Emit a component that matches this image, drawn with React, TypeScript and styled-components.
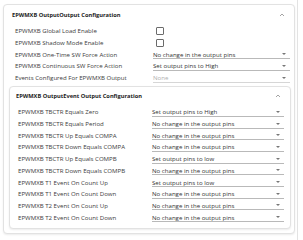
import React from "react";
import styled, { createGlobalStyle } from "styled-components";

const GlobalStyle = createGlobalStyle`
    html, body {
        margin: 0;
        padding: 0;
        background: #ffffff;
    }
    body {
        font-family: "Open Sans", "Liberation Sans", sans-serif;
    }
`;

const Page = styled.div`
    display: flex;
    width: 303px;
    height: 240px;
    overflow: hidden;
    background: #fff;
`;

const Main = styled.div`
    width: 298px;
    padding: 4px 0 0 3px;
    box-sizing: border-box;
`;

const Edge = styled.div`
    width: 5px;
    border-left: 1px solid #e3e3e3;
`;

const Card = styled.section<{ $inner?: boolean }>`
    border: 1px solid #e2e2e2;
    border-radius: 4px;
    background: #fff;
    box-shadow: 0 1px 2px rgba(0, 0, 0, 0.08);
    width: ${(p) => (p.$inner ? "282px" : "292px")};
    box-sizing: border-box;
    margin: ${(p) => (p.$inner ? "2.6px 0 0 5px" : "0")};
    padding-bottom: ${(p) => (p.$inner ? "5px" : "4px")};
`;

const Header = styled.div<{ $inner?: boolean }>`
    display: flex;
    align-items: center;
    justify-content: space-between;
    height: ${(p) => (p.$inner ? "19px" : "20px")};
    padding: ${(p) => (p.$inner ? "0 9px 2px 6px" : "0 9px 0 8px")};
    font-size: 5.7px;
    font-weight: 700;
    color: #222;
    box-sizing: border-box;
`;

const Chevron = () => (
    <svg width="6" height="4" viewBox="0 0 6 4">
        <polyline points="1,3 3,1 5,3" fill="none" stroke="#9a9a9a" strokeWidth="0.9" />
    </svg>
);

const Row = styled.div<{ $inner?: boolean }>`
    display: flex;
    align-items: center;
    height: 11.7px;
    padding-left: ${(p) => (p.$inner ? "8px" : "11px")};
    padding-right: ${(p) => (p.$inner ? "6px" : "4px")};
`;

const Label = styled.div<{ $inner?: boolean }>`
    width: ${(p) => (p.$inner ? "134px" : "138px")};
    flex-shrink: 0;
    font-size: 6.1px;
    color: #3c3c3c;
    white-space: nowrap;
`;

const Box = styled.span`
    display: block;
    width: 6px;
    height: 6px;
    margin-left: 3px;
    border: 1px solid #6b6b6b;
    border-radius: 1px;
`;

const Select = styled.div<{ $disabled?: boolean }>`
    flex: 1;
    display: flex;
    align-items: center;
    justify-content: space-between;
    height: 8px;
    margin-top: 1px;
    border-bottom: 1px solid ${(p) => (p.$disabled ? "#d6d6d6" : "#b9b9b9")};
    font-size: 6.1px;
    color: ${(p) => (p.$disabled ? "#b0b0b0" : "#333")};
    white-space: nowrap;
`;

const Arrow = styled.span`
    width: 0;
    height: 0;
    margin-right: 4px;
    border-left: 2px solid transparent;
    border-right: 2px solid transparent;
    border-top: 2.5px solid #777;
`;

const NO_CHANGE = "No change in the output pins";

const outerRows: { label: string; kind: "check" | "select"; value?: string; disabled?: boolean }[] = [
    { label: "EPWMXB Global Load Enable", kind: "check" },
    { label: "EPWMXB Shadow Mode Enable", kind: "check" },
    { label: "EPWMXB One-Time SW Force Action", kind: "select", value: NO_CHANGE },
    { label: "EPWMXB Continuous SW Force Action", kind: "select", value: "Set output pins to High" },
    { label: "Events Configured For EPWMXB Output", kind: "select", value: "None", disabled: true },
];

const eventRows = [
    ["EPWMXB TBCTR Equals Zero", "Set output pins to High"],
    ["EPWMXB TBCTR Equals Period", NO_CHANGE],
    ["EPWMXB TBCTR Up Equals COMPA", NO_CHANGE],
    ["EPWMXB TBCTR Down Equals COMPA", NO_CHANGE],
    ["EPWMXB TBCTR Up Equals COMPB", "Set output pins to low"],
    ["EPWMXB TBCTR Down Equals COMPB", NO_CHANGE],
    ["EPWMXB T1 Event On Count Up", "Set output pins to low"],
    ["EPWMXB T1 Event On Count Down", NO_CHANGE],
    ["EPWMXB T2 Event On Count Up", NO_CHANGE],
    ["EPWMXB T2 Event On Count Down", NO_CHANGE],
];

const App = () => {
    return (
        <>
            <GlobalStyle />
            <Page>
                <Main>
                    <Card>
                        <Header>
                            <span>EPWMXB OutputOutput Configuration</span>
                            <Chevron />
                        </Header>
                        {outerRows.map((r) => (
                            <Row key={r.label}>
                                <Label>{r.label}</Label>
                                {r.kind === "check" ? (
                                    <Box />
                                ) : (
                                    <Select $disabled={r.disabled}>
                                        <span>{r.value}</span>
                                        <Arrow />
                                    </Select>
                                )}
                            </Row>
                        ))}
                        <Card $inner>
                            <Header $inner>
                                <span>EPWMXB OutputEvent Output Configuration</span>
                                <Chevron />
                            </Header>
                            {eventRows.map(([label, value]) => (
                                <Row $inner key={label}>
                                    <Label $inner>{label}</Label>
                                    <Select>
                                        <span>{value}</span>
                                        <Arrow />
                                    </Select>
                                </Row>
                            ))}
                        </Card>
                    </Card>
                </Main>
                <Edge />
            </Page>
        </>
    );
};

export default App;
